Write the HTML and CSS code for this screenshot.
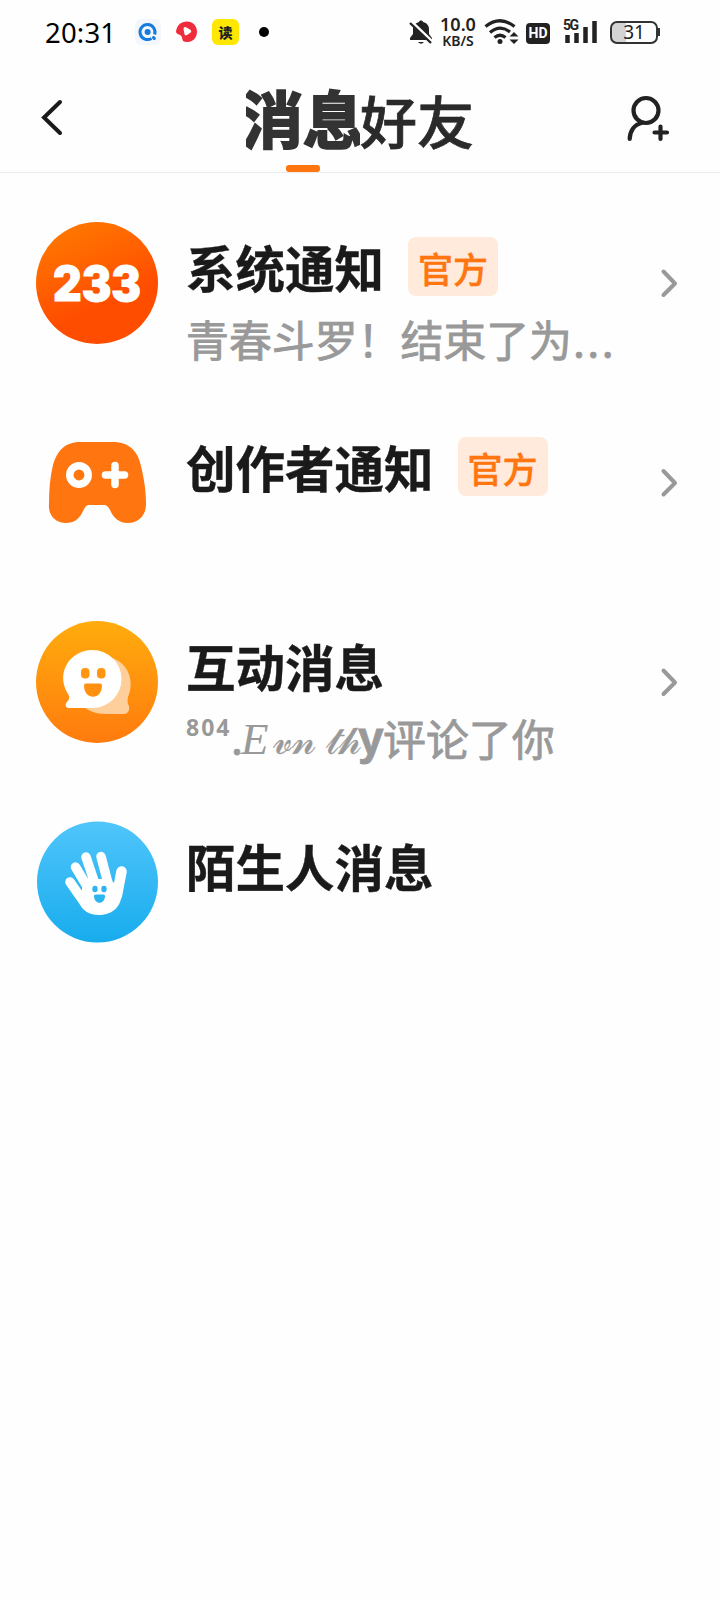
FILE: index.html
```html
<!DOCTYPE html>
<html lang="zh-CN">
<head>
<meta charset="utf-8">
<meta name="viewport" content="width=device-width">
<title>消息</title>
<link rel="stylesheet" href="styles.css">
</head>
<body>
<div class="statusbar">
  <span class="clock">20:31</span>
  <svg class="notif-icons" width="170" height="32" viewBox="0 0 170 32">
    <rect x="4" y="3" width="26" height="26" rx="6" fill="#f3f6fa"/>
    <path d="M20.500 22.400A7.500 7.500 0 1 1 23.600 18.500" fill="none" stroke="#147be0" stroke-width="3"/>
    <path d="M22.500 21.500l.8 1" stroke="#147be0" stroke-width="3" stroke-linecap="round"/>
    <circle cx="16.600" cy="16" r="3" fill="#147be0"/>
    <path d="M45 15.500C46 9 50 5.500 56 5.500c6 0 10 4.500 10 10.300s-4 10-9 10.200c-4 .2-5.500-.7-5.800-3.500-.2-2-1.200-3.200-3.200-4-2-.7-3-1.500-3-3z" fill="#ee2c3c"/>
    <path d="M52.500 13q0-2.500 2.500-1.700l4 2.300q2.500 1.800 0 3.500l-3 2q-2.500 1-2.700-1.500z" fill="#fff"/>
    <rect x="81" y="3" width="27" height="26" rx="6" fill="#ffe800"/>
    <text class="read-app" x="94.500" y="21.500" text-anchor="middle">读</text>
    <circle cx="133" cy="16" r="5" fill="#000"/>
  </svg>
  <span class="status-gap"></span>
  <svg class="bell" width="24" height="28" viewBox="0 0 24 28">
    <path d="M1 22v-2l3-4v-5c0-4 3-6 6-7 0-2 4-2 4 0 4 1 6 4 6 7v5l3 4v2zM9 24h6q-3 3.500-6 0z" fill="#222"/>
    <path d="M2 4L24 25" stroke="#fff" stroke-width="4"/>
    <path d="M1 5L22 25" stroke="#222" stroke-width="2.400"/>
  </svg>
  <span class="speed"><b>10.0</b><span>KB/S</span></span>
  <svg class="wifi" width="36" height="28" viewBox="0 0 36 28">
    <g fill="none" stroke="#222" stroke-width="3.200">
      <path d="M1.500 8.500Q16 -3 30.500 8.500M6 14.500Q16 6 26 14M10.500 19.500Q16 15 21.500 19.500"/>
    </g>
    <circle cx="16" cy="23.500" r="2.500" fill="#222"/>
    <path d="M30 14l4.500 4.500h-9zM30 26l4.500-4.500h-9z" fill="#222"/>
  </svg>
  <span class="hd">HD</span>
  <svg class="signal" width="36" height="28" viewBox="0 0 36 28">
    <text class="net" x="0" y="11.500" textLength="16">5G</text>
    <path d="M4.500 17v8M13.500 15v10M22.500 9v16M31.500 3v22" stroke="#222" stroke-width="4.500"/>
  </svg>
  <span class="battery"><span class="cell">31</span><span class="nub"></span></span>
</div>

<header class="topbar">
  <svg class="back" width="24" height="38" viewBox="0 0 24 38">
    <path d="M20 3L4 18.500L20 34" fill="none" stroke="#1a1a1a" stroke-width="4" stroke-linecap="round"/>
  </svg>
  <nav class="tabs">
    <span class="tab active"><span class="tab-text">消息</span></span>
    <span class="tab">好友</span>
  </nav>
  <svg class="add-friend" width="46" height="50" viewBox="0 0 46 50">
    <g fill="none" stroke="#222" stroke-width="4.200" stroke-linecap="round">
      <circle cx="20" cy="16.500" r="12.500"/>
      <path d="M15.500 29C8 30.500 3.800 37.500 3.700 45M28.500 38.500h12.500M34.500 32.500v12.500"/>
    </g>
  </svg>
</header>

<main class="list">
  <section class="item">
    <svg class="avatar" width="122" height="122" viewBox="0 0 122 122">
      <defs><linearGradient id="g1" x1="0.2" y1="0" x2="0.5" y2="0.7"><stop offset="0" stop-color="#ff7a00"/><stop offset="1" stop-color="#ff4d00"/></linearGradient></defs>
      <circle cx="61" cy="61" r="61" fill="url(#g1)"/>
      <text class="logo" x="17" y="79" textLength="88" lengthAdjust="spacingAndGlyphs">233</text>
    </svg>
    <div class="body">
      <div class="row"><h2>系统通知</h2><span class="badge">官方</span></div>
      <p class="preview">青春斗罗！结束了为<span class="dots">...</span></p>
    </div>
    <svg class="chevron" width="20" height="30" viewBox="0 0 20 30"><path d="M4.500 3.500L16 15.500L4.500 27"/></svg>
  </section>

  <section class="item">
    <svg class="avatar" width="122" height="122" viewBox="0 0 122 122">
      <path d="M44 20H77C94 20 102 30 105 44C108 57 110 68 110 82C110 94 102 101 92 101C83 101 78 96 75 90C73 86 72 83 67 83H54C49 83 49 86 46 91C43 97 38 101 30 101C20 101 12 94 13 82C13 68 14 55 17 43C21 29 29 20 44 20z" fill="#ff750f"/>
      <circle cx="43" cy="53" r="9.200" fill="none" stroke="#fff" stroke-width="7.500"/>
      <path d="M69.500 53h19M79 43.500v19" stroke="#fff" stroke-width="7.500" stroke-linecap="round"/>
    </svg>
    <div class="body">
      <div class="row"><h2>创作者通知</h2><span class="badge">官方</span></div>
    </div>
    <svg class="chevron" width="20" height="30" viewBox="0 0 20 30"><path d="M4.500 3L16 15L4.500 26.500"/></svg>
  </section>

  <section class="item">
    <svg class="avatar" width="122" height="122" viewBox="0 0 122 122">
      <defs><linearGradient id="g2" x1="0" y1="0" x2="0" y2="1"><stop offset="0" stop-color="#ffac0d"/><stop offset="1" stop-color="#ff7b0e"/></linearGradient></defs>
      <circle cx="61" cy="61" r="61" fill="url(#g2)"/>
      <path d="M76 37C92 42 99 60 92 76Q91 80 92 83C95 88 92 93 88 93H70C60 93 54 90 49 87z" fill="#ffcf9b"/>
      <path d="M56.500 29a29 29 0 1 1 0 58H33C29 87 29 83 31 81Q35 77 32 73C19 52 34 29 56.500 29z" fill="#fff"/>
      <rect x="45" y="47" width="8.500" height="10.500" rx="4" fill="#ff9610"/><rect x="61" y="47" width="8.500" height="10.500" rx="4" fill="#ff9610"/>
      <path d="M48 64.500q0-2 2-2h14q2 0 2 2c0 15-18 15-18 0z" fill="#ff9010"/>
    </svg>
    <div class="body">
      <div class="row"><h2>互动消息</h2></div>
      <p class="preview name-line"><span class="sup">804</span><span class="period">.</span><span class="cap">E</span><span class="low vn">𝓋𝓃</span><span class="low th">𝓉𝒽</span><b class="bold-y">y</b>评论了你</p>
    </div>
    <svg class="chevron" width="20" height="30" viewBox="0 0 20 30"><path d="M4.500 3.500L16 15.500L4.500 27"/></svg>
  </section>

  <section class="item">
    <svg class="avatar" width="122" height="122" viewBox="0 0 122 122">
      <defs><linearGradient id="g3" x1="0" y1="0" x2="0" y2="1"><stop offset="0" stop-color="#50c5fb"/><stop offset="1" stop-color="#18aced"/></linearGradient></defs>
      <circle cx="61.500" cy="61" r="60.500" fill="url(#g3)"/>
      <g fill="none" stroke="#fff" stroke-linecap="round" stroke-width="9.500">
        <path d="M34 61L50 84M39.500 46L55 72M50 36L60 66M65 35.500L73 66"/>
        <path d="M85.500 50.500L81 74" stroke-width="10.500"/>
      </g>
      <path d="M46 66L57 58H74L86 70C86 85 77 94 63 94C55 94 49 91 45.500 86z" fill="#fff"/>
      <ellipse cx="59" cy="68" rx="2.700" ry="3.200" fill="#2db5f0"/><ellipse cx="68" cy="68" rx="2.700" ry="3.200" fill="#2db5f0"/>
      <path d="M58 75q0-1.500 1.500-1.500h8q1.500 0 1.500 1.500c0 9-11 9-11 0z" fill="#2db5f0"/>
    </svg>
    <div class="body">
      <div class="row"><h2>陌生人消息</h2></div>
    </div>
  </section>
</main>
</body>
</html>
```

FILE: styles.css
```css
* { box-sizing: border-box; margin: 0; padding: 0; }
body {
  width: 720px; min-height: 1600px; background: #fefefe; color: #1a1a1a;
  font-family: "Noto Sans CJK SC", sans-serif;
}
.statusbar { display: flex; align-items: center; height: 64px; padding: 0 60px 0 45px; }
.clock { font-family: "Noto Sans", sans-serif; font-size: 27.500px; color: #000; width: 71px; letter-spacing: 0.2px; }
.notif-icons { margin-left: 15px; flex: none; }
.read-app { font: 900 14px "Noto Sans CJK SC", sans-serif; fill: #222; }
.status-gap { flex: 1; }
.bell, .wifi, .signal { flex: none; }
.speed { display: flex; flex-direction: column; align-items: center; font-family: "Noto Sans", sans-serif; color: #222; width: 38px; height: 38px; margin: 4px 7px 0 6px; }
.speed b { font-size: 18px; line-height: 19px; font-weight: 600; }
.speed span { font-size: 14px; line-height: 19px; font-weight: 600; margin-top: -3px; }
.hd { width: 24px; height: 21px; border-radius: 4px; background: #222; color: #fff; font: bold 14px/21px Roboto, sans-serif; text-align: center; margin: 2px 13px 0 6px; }
.net { font: bold 14px Roboto, sans-serif; fill: #222; }
.battery { display: flex; align-items: center; margin-left: 11px; }
.cell { width: 48px; height: 23px; border: 2px solid #333; border-radius: 7px; background: linear-gradient(90deg, #d4d4d4 31%, #fff 31%); font: 19px/19px "Noto Sans", sans-serif; text-align: center; color: #222; }
.nub { width: 2px; height: 8px; background: #333; }
.bell { margin-left: -2px; }

.topbar { display: flex; height: 109px; border-bottom: 1px solid #ececec; padding: 0 48px 0 40px; }
.back { margin-top: 35px; flex: none; }
.tabs { display: flex; margin-left: 182px; width: 232px; }
.tab { font-size: 57px; line-height: 110px; font-weight: 500; color: #2a2a2a; white-space: nowrap; -webkit-text-stroke: 0.7px #2a2a2a; }
.tab.active { width: 114px; height: 108px; overflow: hidden; font-size: 62px; font-weight: 700; color: #333; -webkit-text-stroke: 2.200px #333; display: flex; flex-direction: column; align-items: center; }
.tab-text { height: 101px; line-height: 106px; }
.tab.active::after { content: ""; width: 34px; height: 7px; border-radius: 3px; background: #ff750f; flex: none; }
.add-friend { margin: 30px 0 0 auto; flex: none; }

.list { padding: 23px 41px 0 36px; }
.item { display: flex; height: 199.500px; padding-top: 26px; }
.avatar { flex: none; }
.logo { font: 900 48px Inter, sans-serif; fill: #fff; stroke: #fff; stroke-width: 1; }
.body { flex: 1; padding: 10px 0 0 28px; white-space: nowrap; }
.row { display: flex; align-items: flex-start; height: 71px; }
h2 { font-size: 49.500px; line-height: 70px; font-weight: 700; -webkit-text-stroke: 0.4px #1a1a1a; }
.badge { width: 90px; height: 59px; margin: 5px 0 0 24px; border-radius: 8px; background: #ffeadc; color: #ff750f; font-size: 35px; line-height: 61px; font-weight: 500; text-align: center; -webkit-text-stroke: 0.4px #ff750f; }
.preview { font-size: 42.900px; line-height: 70px; color: #999; -webkit-text-stroke: 0.8px #999; }
.dots { letter-spacing: 2.400px; margin-left: 1px; }
.chevron { margin: 46px 0 0; flex: none; fill: none; stroke: #999; stroke-width: 4; stroke-linecap: round; stroke-linejoin: round; }
.name-line { display: flex; height: 70px; }
.sup { width: 47px; font: bold 23px/51px "Noto Sans", sans-serif; letter-spacing: 2px; -webkit-text-stroke: 0; }
.period { width: 8px; text-indent: -2px; line-height: 66px; }
.cap { width: 32px; font: italic 45px/75px "Liberation Serif", serif; -webkit-text-stroke: 0; }
.low { font-size: 39px; -webkit-text-stroke: 0.3px #999; }
.vn { width: 53px; }
.th { width: 32px; }
.bold-y { width: 25px; font: bold 46px/72px "Liberation Sans", sans-serif; }
```
